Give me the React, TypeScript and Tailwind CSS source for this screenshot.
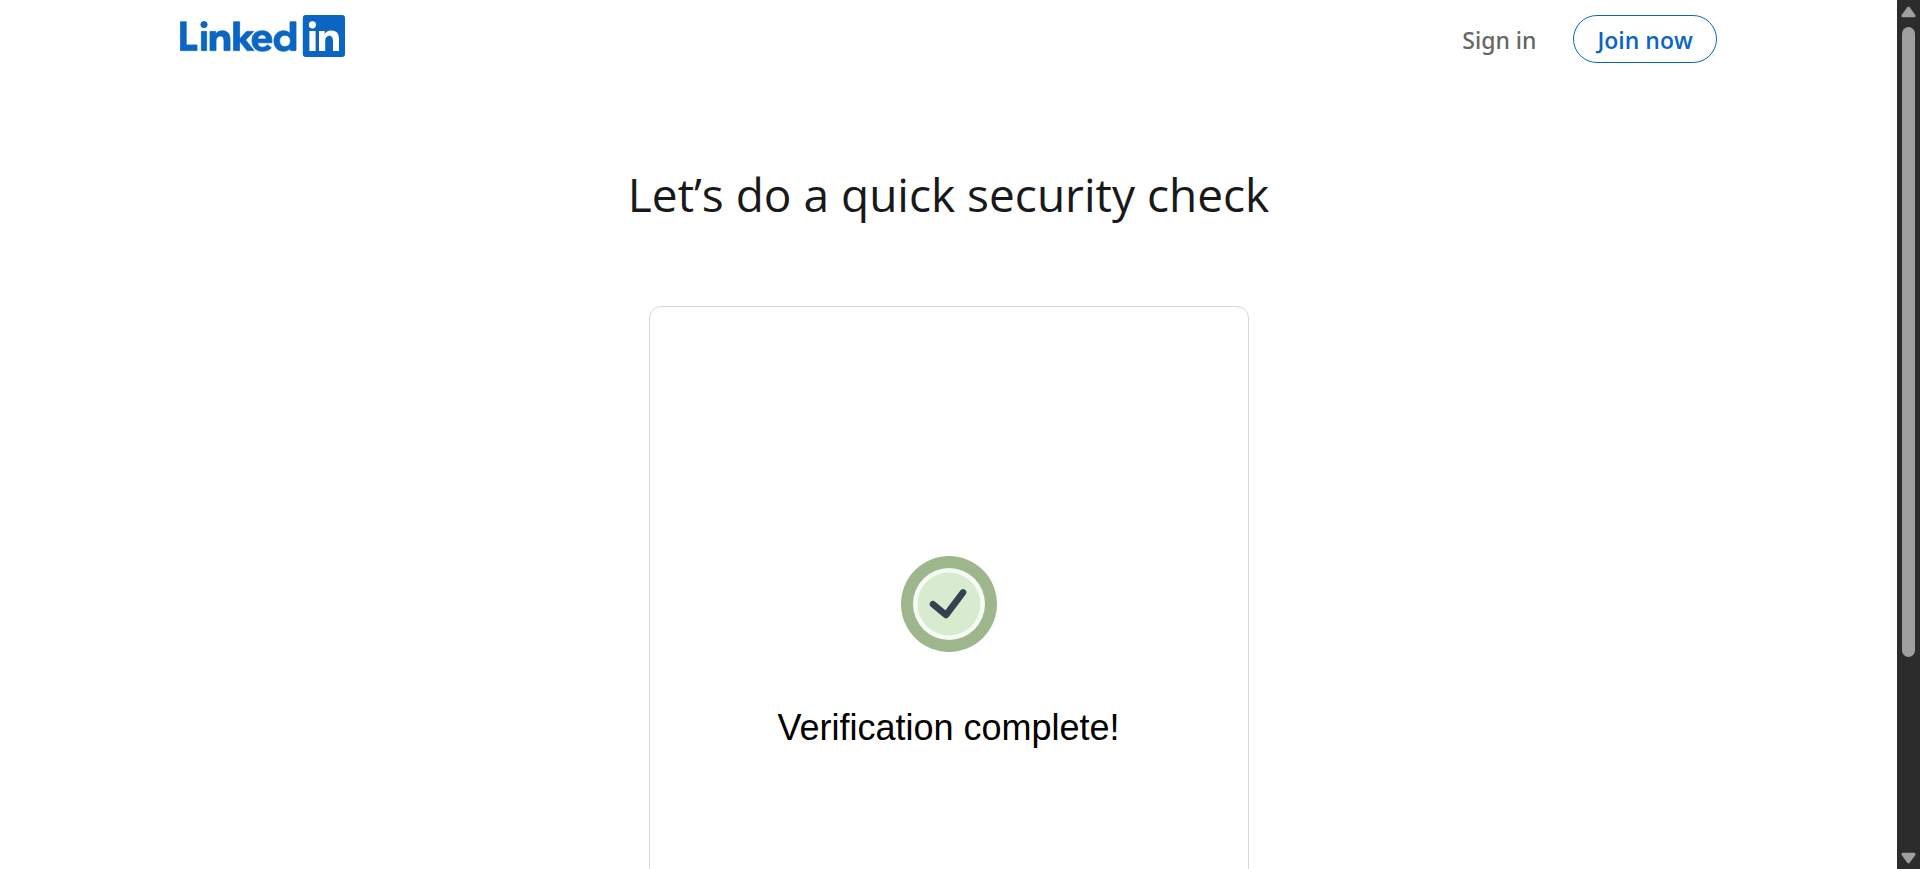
function LinkedInLogo() {
  return (
    <svg viewBox="0 0 82.5 21" className="h-[42px] w-[165px]" fill="#0a66c2" aria-hidden="true">
      <g stroke="#0a66c2" strokeWidth=".4">
        <path d="M.2 3.4H3.1V15H8.5V17.8H.2Z" />
        <circle cx="12" cy="4.8" r="1.6" />
        <path d="M10.7 8.2H13.3V17.8H10.7Z" />
        <path
          transform="translate(-1 0)"
          d="M16 8.2H18.827V9.441H18.858C19.289 8.664 20.562 7.875 22.136 7.875C25.157 7.875 26 9.792 26 12.45V17.8H23V12.997C23 11.525 22.469 10.5 21.227 10.5C19.719 10.5 19 11.694 19 13.197V17.8H16Z"
        />
        <path transform="translate(-1.2 0)" d="M38 8.2H34.5L31 12V3.4H28V17.8H31V13L34.699 17.8H38.241L34 12.533Z" />
        <path
          transform="translate(-2 0)"
          d="M47.661 16.389C46.953 17.306 45.495 18.125 43.141 18.125C40 18.125 38 16.046 38 12.778C38 9.875 39.812 7.875 43.229 7.875C46.18 7.875 48 9.813 48 13.222C48 13.563 47.945 13.9 47.945 13.9H40.831L40.848 14.209C41.045 15.071 41.696 16.125 43.19 16.125C44.494 16.125 45.388 15.424 45.792 14.875ZM45.113 12C45.133 10.945 44.359 9.875 43.139 9.875C41.687 9.875 40.912 11.009 40.831 12Z"
        />
        <path
          fillRule="evenodd"
          transform="translate(-2 0)"
          d="M60 17.8H57.2V16.809H57.17C56.547 17.531 55.465 18.125 53.631 18.125C51.131 18.125 48.978 16.244 48.978 13.011C48.978 9.931 51.1 7.875 53.725 7.875C55.35 7.875 56.359 8.453 56.97 9.191H57V3.4H60ZM54.479 10.125C52.764 10.125 51.8 11.348 51.8 12.974C51.8 14.601 52.764 15.875 54.479 15.875C56.196 15.875 57.2 14.634 57.2 12.974C57.2 11.268 56.196 10.125 54.479 10.125Z"
        />
      </g>
      <rect x="61.4" y="0" width="21.1" height="21" rx="1.5" />
      <g fill="#fff" transform="translate(61.5 0)">
        <circle cx="4.7" cy="4.9" r="1.8" />
        <path d="M3.2 8H6.3V18H3.2Z" />
        <path d="M8 8H10.827V9.441H10.858C11.289 8.664 12.562 7.75 14.136 7.75C17.157 7.75 18 9.479 18 12.2V18H15V12.997C15 11.667 14.469 10.4 13.227 10.4C11.719 10.4 11.1 11.521 11.1 13.197V18H8Z" />
      </g>
    </svg>
  );
}

function Scrollbar() {
  return (
    <div className="flex w-[23px] shrink-0 flex-col items-center bg-[#2c2c2c] pt-[6px] pb-[5px]" aria-hidden="true">
      <svg viewBox="0 0 15 12" className="h-[12px] w-[15px] shrink-0" fill="#9f9f9f">
        <path d="M6.4 1.2Q7.5-.2 8.6 1.2L14.4 9Q15 11 13.2 11.2H1.8Q0 11 .6 9Z" />
      </svg>
      <div className="flex min-h-0 w-[13px] flex-1 flex-col pt-[9px]">
        <div className="h-[76.4%] rounded-full bg-[#9f9f9f]" />
      </div>
      <svg viewBox="0 0 15 12" className="h-[12px] w-[15px] shrink-0" fill="#9f9f9f">
        <path d="M6.4 10.8Q7.5 12.2 8.6 10.8L14.4 3Q15 1 13.2 .8H1.8Q0 1 .6 3Z" />
      </svg>
    </div>
  );
}

export default function App() {
  return (
    <div className="flex h-screen overflow-hidden bg-white">
      <div className="min-w-0 flex-1 overflow-hidden font-['Segoe_UI','Open_Sans',sans-serif]">
        <header className="mx-auto flex w-[81%] items-start justify-between pt-[15px]">
          <a href="#" aria-label="LinkedIn">
            <LinkedInLogo />
          </a>
          <nav className="flex items-center gap-4 text-[23px] leading-8">
            <a href="#" className="px-[21px] pt-[2px] font-['Segoe_UI','Noto_Sans',sans-serif] font-medium text-[#666666]">
              Sign in
            </a>
            <a
              href="#"
              className="flex h-12 items-center rounded-full border border-[#0a66c2] px-[23px] pt-[2px] font-semibold text-[#0a66c2]"
            >
              Join now
            </a>
          </nav>
        </header>
        <main className="flex flex-col items-center">
          <h1 className="mt-[101px] text-center text-[46px] leading-[60px] font-normal text-[#191919]">
            Let’s do a quick security check
          </h1>
          <section className="mt-[82px] flex h-[700px] w-[600px] max-w-full flex-col items-center rounded-xl border border-[#d6d6d6] pt-[249px]">
            <svg viewBox="0 0 96 96" className="size-24" aria-hidden="true">
              <circle cx="48" cy="48" r="48" fill="#9db68c" />
              <circle cx="48" cy="48" r="36" fill="#f7fbf5" />
              <circle cx="48" cy="48" r="31.5" fill="#d7ebcf" />
              <path
                d="M32 48.2L45 59L62 36.5"
                fill="none"
                stroke="#36404e"
                strokeWidth="6.6"
                strokeLinecap="round"
                strokeLinejoin="round"
              />
            </svg>
            <h2 className="mt-14 font-['Liberation_Sans',Arial,sans-serif] text-[36px] leading-10 font-normal text-black">
              Verification complete!
            </h2>
          </section>
        </main>
      </div>
      <Scrollbar />
    </div>
  );
}
